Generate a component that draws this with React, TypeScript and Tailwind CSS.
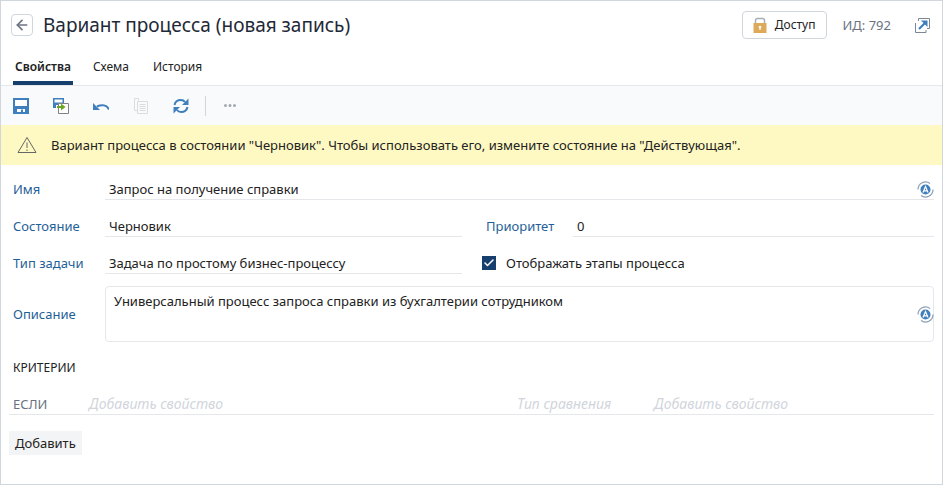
import { ArrowLeft, Check } from "lucide-react";

function SaveIcon() {
    return (
        <svg width="16" height="16" viewBox="0 0 16 16">
            <path d="M0 0h16v16H0z" fill="#3f7fbd" />
            <path d="M2 2h12v6H2z" fill="#fff" />
            <path d="M4 11h8v3H4z" fill="#fff" />
            <path d="M8 11.500h2V14H8z" fill="#3f7fbd" />
        </svg>
    );
}

function SaveAsIcon() {
    return (
        <svg width="16" height="16" viewBox="0 0 16 16">
            <path d="M0 0h11v10H0z" fill="#3f7fbd" />
            <path d="M1.500 1.500h8v3h-8z" fill="#fff" />
            <path d="M3 7h5v3H3z" fill="#fff" />
            <path d="M5.500 5.500h10v10h-10z" fill="#fff" stroke="#808080" />
            <path d="M4 8h4V5.500L12.500 9 8 12.500V10H4z" fill="#6aa820" />
        </svg>
    );
}

function UndoIcon() {
    return (
        <svg width="16" height="8" viewBox="0 0 16 8" fill="none">
            <path d="M16 7.500C14 3 9 2 4 4.500" stroke="#3f7fbd" strokeWidth="2" />
            <path d="M0 1v7h7z" fill="#3f7fbd" />
        </svg>
    );
}

function CopyIcon() {
    return (
        <svg width="16" height="16" viewBox="0 0 16 16" fill="none" stroke="#d9dde1">
            <path d="M5.500 2.500v-2h-4v12h3" />
            <path d="M4.500 3.500h10v12h-10z" fill="#fafafa" />
            <path d="M6.500 6.500h6M6.500 8.500h6M6.500 10.500h6M6.500 12.500h6" />
        </svg>
    );
}

function RefreshIcon() {
    return (
        <svg width="16" height="16" viewBox="0 0 16 16" fill="none">
            <path d="M1.500 7C2.200 3.800 5 2 7.800 2c1.800 0 3.300 .7 4.200 2" stroke="#3f7fbd" strokeWidth="2" />
            <path d="M15.500 0.500v6.500H9z" fill="#3f7fbd" />
            <path d="M14.500 9c-.7 3.200-3.500 5-6.300 5-1.800 0-3.300-.7-4.200-2" stroke="#3f7fbd" strokeWidth="2" />
            <path d="M0.500 15.500V9H7z" fill="#3f7fbd" />
        </svg>
    );
}

function DotsIcon() {
    return (
        <svg width="12" height="3" viewBox="0 0 12 3" fill="#a3a9b3">
            <circle cx="1.500" cy="1.500" r="1.500" />
            <circle cx="6" cy="1.500" r="1.500" />
            <circle cx="10.500" cy="1.500" r="1.500" />
        </svg>
    );
}

function LockIcon() {
    return (
        <svg width="14" height="16" viewBox="0 0 14 16" fill="none">
            <path d="M2.500 6V3.500a2 2 0 0 1 2-2h5a2 2 0 0 1 2 2V6" stroke="#a8adb3" strokeWidth="1.500" />
            <path d="M0.500 6h13v10h-13z" fill="#dfa95a" />
            <circle cx="7" cy="10" r="1.300" fill="#fff" />
            <path d="M6.400 10h1.200v3H6.400z" fill="#fff" />
        </svg>
    );
}

function OpenIcon() {
    return (
        <svg width="15" height="15" viewBox="0 0 15 15" fill="none">
            <path d="M3.500 3V0.500h11v10H12" stroke="#7b8794" />
            <path d="M0.500 5v9.500h10.500V12" stroke="#7b8794" />
            <path d="M4 11l6-6" stroke="#3f7fbd" strokeWidth="2.200" />
            <path d="M6 2.500h6.500V9z" fill="#3f7fbd" />
        </svg>
    );
}

function TranslateIcon() {
    return (
        <svg width="17" height="17" viewBox="0 0 17 17" fill="none">
            <path d="M1 8.500a7.500 7.500 0 0 1 12-6" stroke="#8ca0b3" strokeWidth="1.200" />
            <path d="M16 8.500a7.500 7.500 0 0 1-12 6" stroke="#8ca0b3" strokeWidth="1.200" />
            <circle cx="8.500" cy="8.500" r="5" fill="#3f7fbd" />
            <path d="M6 11.500l2.500-6 2.500 6M6.800 9.800h3.400" stroke="#fff" strokeWidth="1.200" />
        </svg>
    );
}

function Field({ value }: { value: string }) {
    return <div className="flex-1 border-b border-gray-200 px-1 pt-1">{value}</div>;
}

function Label({ text }: { text: string }) {
    return <div className="w-[92px] pt-1 text-[#1f5f99]">{text}</div>;
}

export default function App() {
    return (
        <div
            className="flex h-[485px] w-[943px] flex-col overflow-hidden border border-gray-300 bg-white text-[13px] leading-5 text-[#222]"
            style={{ fontFamily: '"Noto Sans", sans-serif' }}
        >
            <div className="flex h-[84px] flex-col">
                <div className="flex items-center gap-2.5 pt-2.5 pr-3 pl-2.5">
                    <button className="flex size-5.5 items-center justify-center rounded-sm border border-gray-300">
                        <ArrowLeft className="size-4 text-gray-500" strokeWidth={2.5} />
                    </button>
                    <h1 className="flex-1 text-[19px] leading-7 text-[#1f2937]">Вариант процесса (новая запись)</h1>
                    <button className="flex h-7 items-center gap-2 rounded-sm border border-gray-300 px-2.5 text-xs">
                        <LockIcon />
                        Доступ
                    </button>
                    <span className="ml-1.5 text-gray-500">ИД: 792</span>
                    <span className="ml-3.5">
                        <OpenIcon />
                    </span>
                </div>
                <div className="mt-auto flex gap-5 pl-3 text-xs">
                    <div className="border-b-4 border-[#163f6e] px-0.5 pb-1.5 font-semibold">Свойства</div>
                    <div className="pb-1.5">Схема</div>
                    <div className="pb-1.5 pl-1">История</div>
                </div>
            </div>
            <div className="flex h-10 items-center gap-6 border-t border-gray-200 bg-gray-50 pl-3">
                <SaveIcon />
                <SaveAsIcon />
                <UndoIcon />
                <CopyIcon />
                <RefreshIcon />
                <div className="-ml-2 h-5 w-px bg-gray-300" />
                <div className="-ml-1.5 flex">
                    <DotsIcon />
                </div>
            </div>
            <div className="flex h-10 items-center gap-3.5 bg-yellow-100 pl-4">
                <svg width="20" height="18" viewBox="0 0 20 18" fill="none" stroke="#666">
                    <path d="M10 1.500L1 16.500h18z" />
                    <path d="M10 6.500v5.500M10 13.500v1.500" />
                </svg>
                <span>Вариант процесса в состоянии "Черновик". Чтобы использовать его, измените состояние на "Действующая".</span>
            </div>
            <div className="flex flex-col gap-3 pt-2.5 pr-2 pl-3">
                <div className="relative flex items-start">
                    <Label text="Имя" />
                    <Field value="Запрос на получение справки" />
                    <span className="absolute top-1.5 right-0">
                        <TranslateIcon />
                    </span>
                </div>
                <div className="flex items-start">
                    <Label text="Состояние" />
                    <Field value="Черновик" />
                    <div className="flex w-[472px] items-start">
                        <div className="w-[111px] pt-1 pl-6 text-[#1f5f99]">Приоритет</div>
                        <div className="flex-1 border-b border-gray-200 px-1 pt-1">0</div>
                    </div>
                </div>
                <div className="flex items-start">
                    <Label text="Тип задачи" />
                    <Field value="Задача по простому бизнес-процессу" />
                    <div className="flex w-[472px] items-center gap-2.5 pt-1 pl-5">
                        <div className="flex size-3.5 items-center justify-center bg-[#163f6e]">
                            <Check className="size-3 text-white" strokeWidth={3} />
                        </div>
                        Отображать этапы процесса
                    </div>
                </div>
                <div className="relative flex items-center">
                    <div className="w-[92px] text-[#1f5f99]">Описание</div>
                    <div className="h-14 flex-1 rounded-sm border border-gray-200 px-2 py-1">
                        Универсальный процесс запроса справки из бухгалтерии сотрудником
                    </div>
                    <span className="absolute top-5 right-0">
                        <TranslateIcon />
                    </span>
                </div>
            </div>
            <div className="pt-4 pl-3 text-xs leading-5">КРИТЕРИИ</div>
            <div className="mt-4 mr-2 ml-2 flex items-center border-b border-gray-200 pl-1">
                <span className="w-[76px] text-gray-500">ЕСЛИ</span>
                <span className="w-[428px] text-sm text-gray-300 italic">Добавить свойство</span>
                <span className="w-[137px] text-sm text-gray-300 italic">Тип сравнения</span>
                <span className="text-sm text-gray-300 italic">Добавить свойство</span>
            </div>
            <div className="pt-4 pl-2">
                <button className="bg-gray-100 px-1.5 py-0.5">Добавить</button>
            </div>
        </div>
    );
}
